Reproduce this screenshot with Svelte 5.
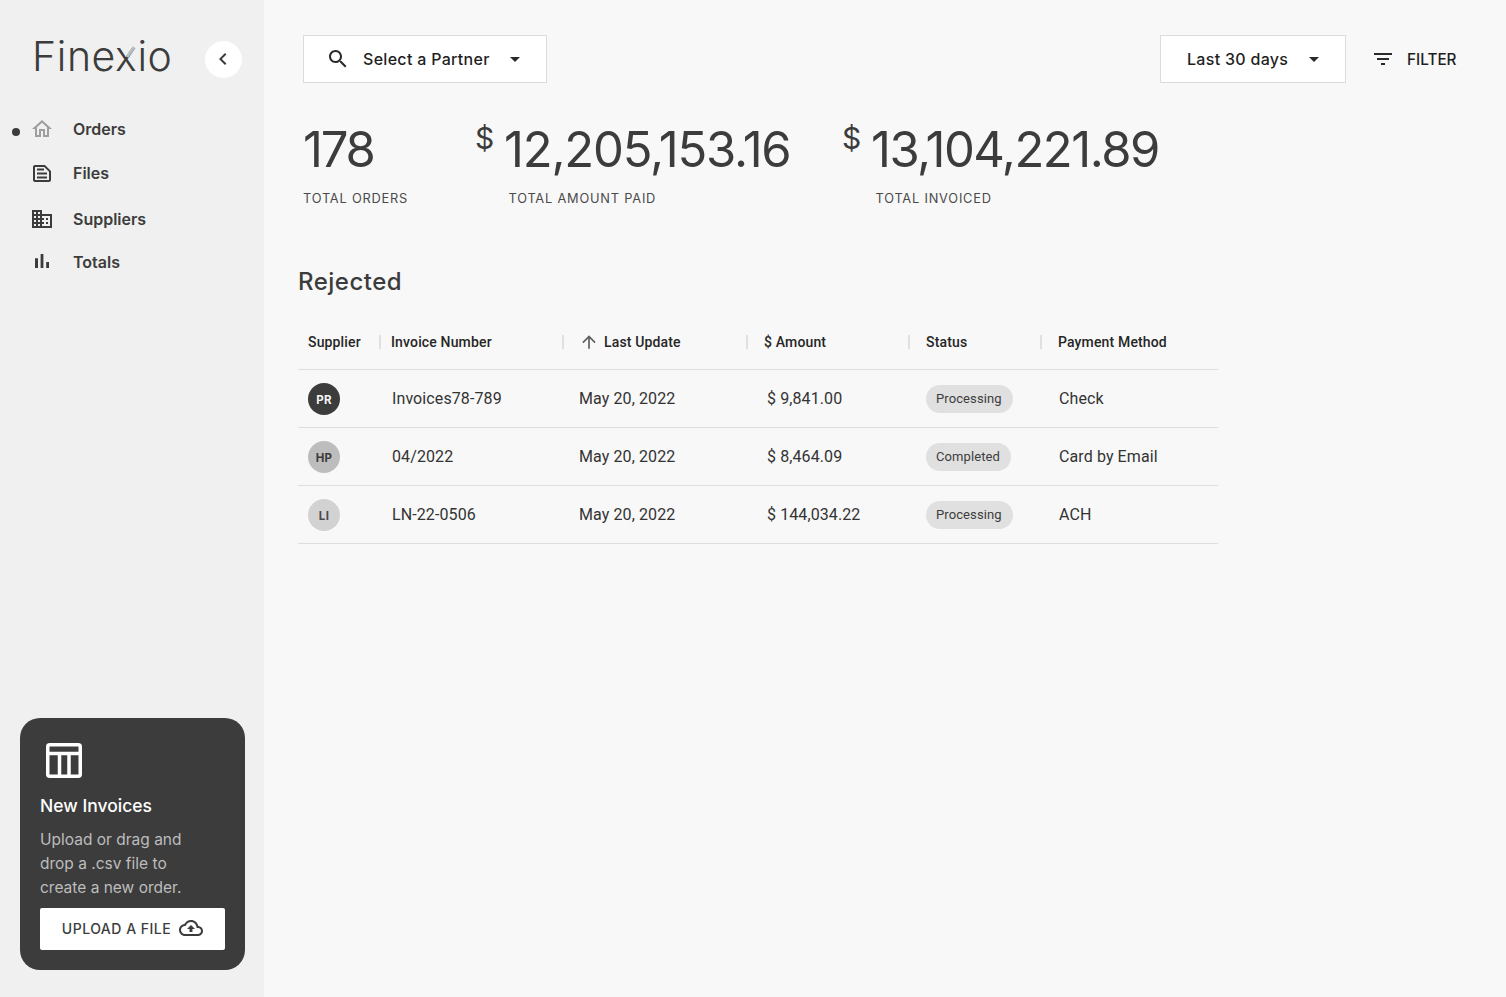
<script>
  const icons = {
    home: "M12 5.69l5 4.5V18h-2v-6H9v6H7v-7.81l5-4.5M12 3L2 12h3v8h6v-6h2v6h6v-8h3L12 3z",
    file: "M15 4H5c-1.100 0-2 .9-2 2v13c0 1.100.9 2 2 2h14c1.100 0 2-.9 2-2V10l-6-6zm4 15H5V6h9.200L19 10.800V19zM7 7.500h7v2H7zm0 4h10v2H7zm0 4h10v2H7z",
    domain: "M12 7V3H2v18h20V7H12zM6 19H4v-2h2v2zm0-4H4v-2h2v2zm0-4H4V9h2v2zm0-4H4V5h2v2zm4 12H8v-2h2v2zm0-4H8v-2h2v2zm0-4H8V9h2v2zm0-4H8V5h2v2zm10 12h-8v-2h2v-2h-2v-2h2v-2h-2V9h8v10zm-2-8h-2v2h2v-2zm0 4h-2v2h2v-2z",
    bars: "M5 8.200h3V18H5zM10.600 4h2.800v14h-2.800zm5.600 8H19v6h-2.800z"
  };

  const nav = [
    { label: "Orders", icon: icons.home, active: true },
    { label: "Files", icon: icons.file },
    { label: "Suppliers", icon: icons.domain },
    { label: "Totals", icon: icons.bars }
  ];

  const rows = [
    { initials: "PR", tone: "dark", invoice: "Invoices78-789", date: "May 20, 2022", amount: "$ 9,841.00", status: "Processing", method: "Check" },
    { initials: "HP", tone: "mid", invoice: "04/2022", date: "May 20, 2022", amount: "$ 8,464.09", status: "Completed", method: "Card by Email" },
    { initials: "LI", tone: "light", invoice: "LN-22-0506", date: "May 20, 2022", amount: "$ 144,034.22", status: "Processing", method: "ACH" }
  ];
</script>

<div class="page">
  <aside class="sidebar">
    <div class="brand">
      <span class="logo">Fine<span class="x">x</span>io</span>
      <button class="collapse" aria-label="Collapse">
        <svg viewBox="0 0 24 24" width="24" height="24"><path d="M15.41 7.41L14 6l-6 6 6 6 1.41-1.41L10.83 12z" /></svg>
      </button>
    </div>

    <nav>
      {#each nav as item}
        <a class="nav-item" class:active={item.active} href="#top">
          <svg viewBox="0 0 24 24" width="24" height="24"><path d={item.icon} /></svg>
          <span>{item.label}</span>
        </a>
      {/each}
    </nav>

    <div class="upload-card">
      <svg class="table-icon" viewBox="0 0 36 35" width="36" height="35">
        <rect x="1.750" y="1.750" width="32.500" height="31.500" rx="2" />
        <path d="M1.750 10.500h32.500M13.500 10.500v23M23 10.500v23" />
      </svg>
      <h3>New Invoices</h3>
      <p>Upload or drag and drop a .csv file to create a new order.</p>
      <button class="upload-btn">
        UPLOAD A FILE
        <svg viewBox="0 0 24 24" width="24" height="24"><path d="M19.35 10.04C18.67 6.59 15.64 4 12 4 9.11 4 6.6 5.64 5.35 8.04 2.34 8.36 0 10.91 0 14c0 3.31 2.69 6 6 6h13c2.76 0 5-2.24 5-5 0-2.64-2.05-4.78-4.65-4.96zM19 18H6c-2.21 0-4-1.79-4-4 0-2.05 1.53-3.76 3.56-3.97l1.07-.11.5-.95C8.08 7.14 9.94 6 12 6c2.62 0 4.88 1.86 5.39 4.43l.3 1.5 1.53.11c1.56.1 2.78 1.41 2.78 2.96 0 1.65-1.35 3-3 3zM8 13h2.55v3h2.9v-3H16l-4-4z" /></svg>
      </button>
    </div>
  </aside>

  <main>
    <div class="toolbar">
      <button class="select partner">
        <svg viewBox="0 0 24 24" width="24" height="24"><path d="M15.5 14h-.79l-.28-.27C15.41 12.59 16 11.11 16 9.5 16 5.91 13.09 3 9.5 3S3 5.91 3 9.5 5.91 16 9.5 16c1.61 0 3.09-.59 4.23-1.57l.27.28v.79l5 4.99L20.49 19l-4.99-5zm-6 0C7.01 14 5 11.99 5 9.5S7.01 5 9.5 5 14 7.01 14 9.5 11.99 14 9.5 14z" /></svg>
        <span>Select a Partner</span>
        <svg class="caret" viewBox="0 0 24 24" width="24" height="24"><path d="M7 10l5 5 5-5z" /></svg>
      </button>
      <button class="select range">
        <span>Last 30 days</span>
        <svg class="caret" viewBox="0 0 24 24" width="24" height="24"><path d="M7 10l5 5 5-5z" /></svg>
      </button>
      <button class="filter">
        <svg viewBox="0 0 24 24" width="24" height="24"><path d="M10 18h4v-2h-4v2zM3 6v2h18V6H3zm3 7h12v-2H6v2z" /></svg>
        FILTER
      </button>
    </div>

    <section class="stats">
      <div class="stat orders">
        <div class="value">178</div>
        <div class="label">TOTAL ORDERS</div>
      </div>
      <div class="stat paid">
        <div class="value"><span class="cur">$</span>12,205,153.16</div>
        <div class="label">TOTAL AMOUNT PAID</div>
      </div>
      <div class="stat invoiced">
        <div class="value"><span class="cur">$</span>13,104,221.89</div>
        <div class="label">TOTAL INVOICED</div>
      </div>
    </section>

    <h2>Rejected</h2>

    <div class="table">
      <div class="row head">
        <div class="th first">Supplier</div>
        <div class="th">Invoice Number</div>
        <div class="th sorted">
          <svg viewBox="0 0 24 24" width="20" height="20"><path d="M4 12l1.41 1.41L11 7.83V20h2V7.83l5.58 5.59L20 12l-8-8-8 8z" /></svg>
          Last Update
        </div>
        <div class="th">$ Amount</div>
        <div class="th">Status</div>
        <div class="th">Payment Method</div>
      </div>
      {#each rows as r}
        <div class="row body">
          <div class="td first"><span class="avatar {r.tone}">{r.initials}</span></div>
          <div class="td invoice">{r.invoice}</div>
          <div class="td date">{r.date}</div>
          <div class="td amount">{r.amount}</div>
          <div class="td status"><span class="chip">{r.status}</span></div>
          <div class="td method">{r.method}</div>
        </div>
      {/each}
    </div>
  </main>
</div>

<style>
  :global(body) {
    margin: 0;
    background: #f8f8f8;
  }

  .page {
    display: flex;
    height: 997px;
    overflow: hidden;
    font-family: Inter, "Liberation Sans", sans-serif;
    color: #3c3c3c;
  }

  button {
    font-family: inherit;
    cursor: pointer;
  }

  /* sidebar */
  .sidebar {
    width: 264px;
    flex-shrink: 0;
    box-sizing: border-box;
    padding: 41px 19px 27px 20px;
    background: #f0f0f0;
    display: flex;
    flex-direction: column;
  }

  .brand {
    display: flex;
    align-items: center;
    justify-content: space-between;
    padding-left: 12px;
    height: 36px;
    margin-right: 3px;
  }

  .logo {
    font-weight: 300;
    font-size: 41px;
    letter-spacing: 0.6px;
    line-height: 36px;
    margin-bottom: 7px;
    color: #3c3c3c;
  }

  .logo .x {
    position: relative;
  }

  .logo .x::after {
    content: "";
    position: absolute;
    left: 14px;
    top: 15px;
    width: 3px;
    height: 12px;
    background: #bdbdbd;
    transform: rotate(36deg);
  }

  .collapse {
    width: 37px;
    height: 37px;
    border: 0;
    border-radius: 50%;
    background: #fff;
    padding: 0 2px 0 0;
    display: flex;
    align-items: center;
    justify-content: center;
  }

  .collapse path {
    fill: #3c3c3c;
  }

  nav {
    margin-top: 30px;
    display: flex;
    flex-direction: column;
    flex: 1;
  }

  .nav-item {
    position: relative;
    display: flex;
    align-items: center;
    gap: 19px;
    height: 44px;
    padding-left: 10px;
    text-decoration: none;
    color: #3c3c3c;
    font-size: 16px;
    font-weight: 600;
  }

  .nav-item:nth-child(3) {
    height: 46px;
    padding-top: 2px;
    box-sizing: border-box;
  }

  .nav-item:nth-child(4) {
    height: 42px;
  }

  .nav-item path {
    fill: #3c3c3c;
  }

  .nav-item.active path {
    fill: #9e9e9e;
  }

  .nav-item.active::before {
    content: "";
    position: absolute;
    left: -8px;
    top: 21px;
    width: 8px;
    height: 8px;
    border-radius: 50%;
    background: #3c3c3c;
  }

  .upload-card {
    box-sizing: border-box;
    width: 225px;
    height: 252px;
    padding: 25px 20px 20px;
    border-radius: 20px;
    background: #3c3c3c;
    color: #fff;
  }

  .table-icon {
    display: block;
    margin-left: 6px;
    fill: none;
    stroke: #fff;
    stroke-width: 3.5;
  }

  .upload-card h3 {
    margin: 16px 0 10px;
    font-size: 17.5px;
    line-height: 24px;
    font-weight: 500;
  }

  .upload-card p {
    margin: 0 0 8px;
    max-width: 160px;
    font-size: 15.5px;
    line-height: 24px;
    color: #bdbdbd;
  }

  .upload-btn {
    width: 185px;
    height: 42px;
    border: 0;
    border-radius: 2px;
    background: #fff;
    color: #3c3c3c;
    font-size: 14px;
    font-weight: 500;
    letter-spacing: 0.5px;
    display: flex;
    align-items: center;
    justify-content: center;
    gap: 8px;
    padding: 0 0 2px;
  }

  .upload-btn path {
    fill: #3c3c3c;
  }

  /* main */
  main {
    flex: 1;
    min-width: 0;
    padding: 35px 0 0 34px;
  }

  .toolbar {
    display: flex;
    align-items: center;
    padding-left: 5px;
  }

  .select {
    box-sizing: border-box;
    height: 48px;
    background: #fff;
    border: 1px solid #dcdcdc;
    display: flex;
    align-items: center;
    font-size: 16px;
    font-weight: 500;
    letter-spacing: 0.3px;
    color: #1f1f1f;
    padding: 0;
  }

  .select path,
  .filter path {
    fill: #2a2a2a;
  }

  .partner {
    width: 244px;
    padding-left: 22px;
    gap: 13px;
  }

  .range {
    width: 186px;
    margin-left: auto;
    padding-left: 26px;
    gap: 14px;
  }

  .filter {
    width: 160px;
    height: 48px;
    border: 0;
    background: none;
    display: flex;
    align-items: center;
    gap: 12px;
    padding: 0 0 0 25px;
    font-size: 15.3px;
    font-weight: 500;
    color: #1f1f1f;
  }

  .stats {
    display: flex;
    margin-top: 37px;
    padding-left: 5px;
  }

  .stat .value {
    font-size: 49px;
    line-height: 60px;
    font-weight: 400;
    letter-spacing: -1.2px;
    white-space: nowrap;
  }

  .orders .value {
    letter-spacing: -2.2px;
  }

  .invoiced .value {
    letter-spacing: -1.5px;
  }

  .stat .cur {
    display: inline-block;
    width: 29px;
    font-size: 30px;
    line-height: 30px;
    letter-spacing: 0;
    vertical-align: 18px;
  }

  .stat .label {
    margin-top: 10px;
    font-size: 12.8px;
    line-height: 18px;
    letter-spacing: 0.8px;
    color: #4a4a4a;
    white-space: nowrap;
  }

  .orders {
    width: 172px;
  }

  .paid {
    width: 367px;
  }

  .paid .label,
  .invoiced .label {
    padding-left: 33.5px;
  }

  h2 {
    margin: 58px 0 0;
    font-size: 24px;
    line-height: 32px;
    font-weight: 500;
    letter-spacing: 0.5px;
    color: #3c3c3c;
  }

  .table {
    width: 920px;
    margin-top: 19px;
    font-family: Roboto, sans-serif;
  }

  .row {
    display: grid;
    grid-template-columns: 81px 183px 184px 162px 132px 178px;
    border-bottom: 1px solid #dedede;
    box-sizing: border-box;
  }

  .head {
    height: 53px;
    padding-bottom: 3px;
    align-items: center;
  }

  .body {
    height: 58px;
    align-items: center;
  }

  .th {
    display: flex;
    align-items: center;
    height: 14px;
    padding-left: 10px;
    font-size: 14px;
    font-weight: 500;
    letter-spacing: 0.15px;
    color: #262626;
    border-left: 2px solid #e0e0e0;
    box-sizing: border-box;
    white-space: nowrap;
  }

  .th.first {
    border-left: 0;
    padding-left: 10px;
  }

  .sorted {
    padding-left: 15px;
    gap: 5px;
  }

  .sorted path {
    fill: #5f5f5f;
  }

  .th:nth-child(4),
  .th:nth-child(5),
  .th:nth-child(6) {
    padding-left: 16px;
  }

  .td {
    font-size: 16px;
    color: #333;
    letter-spacing: 0.1px;
    white-space: nowrap;
  }

  .td.first {
    padding-left: 10px;
    display: flex;
  }

  .invoice {
    padding-left: 13px;
  }

  .date {
    padding-left: 17px;
  }

  .amount {
    padding-left: 21px;
  }

  .status {
    padding-left: 18px;
    display: flex;
  }

  .method {
    padding-left: 19px;
  }

  .avatar {
    width: 32px;
    height: 32px;
    border-radius: 50%;
    display: flex;
    align-items: center;
    justify-content: center;
    font-family: Inter, sans-serif;
    font-size: 11.5px;
    font-weight: 700;
    letter-spacing: 0.3px;
    padding-top: 2px;
    box-sizing: border-box;
  }

  .avatar.dark {
    background: #3c3c3c;
    color: #f5f5f5;
  }

  .avatar.mid {
    background: #bdbdbd;
    color: #3c3c3c;
  }

  .avatar.light {
    background: #d2d2d2;
    color: #4a4a4a;
  }

  .chip {
    height: 28px;
    line-height: 28px;
    padding: 0 11px 0 10px;
    border-radius: 14px;
    background: #e0e0e0;
    color: #3c3c3c;
    font-size: 13px;
  }
</style>
